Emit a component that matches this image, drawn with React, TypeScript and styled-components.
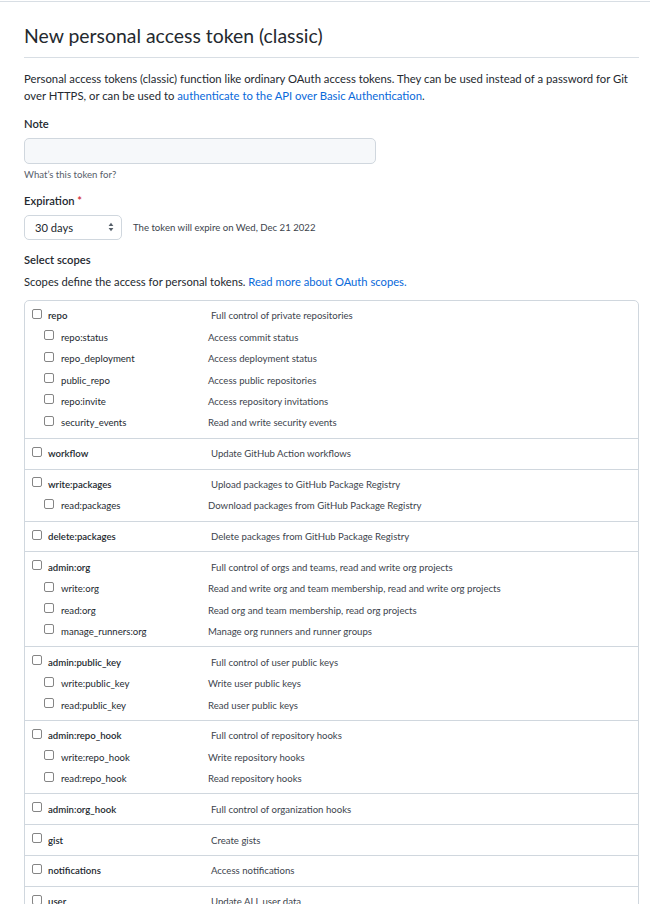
import React from "react";
import styled, { createGlobalStyle } from "styled-components";

const GlobalStyle = createGlobalStyle`
  * { box-sizing: border-box; }
  body {
    margin: 0;
    background: #ffffff;
    color: #24292f;
    font-family: Lato, "Liberation Sans", sans-serif;
    font-size: 11.2px;
  }
`;

type Scope = { name: string; desc: string; children?: [string, string][] };

const scopes: Scope[] = [
  {
    name: "repo",
    desc: "Full control of private repositories",
    children: [
      ["repo:status", "Access commit status"],
      ["repo_deployment", "Access deployment status"],
      ["public_repo", "Access public repositories"],
      ["repo:invite", "Access repository invitations"],
      ["security_events", "Read and write security events"],
    ],
  },
  { name: "workflow", desc: "Update GitHub Action workflows" },
  {
    name: "write:packages",
    desc: "Upload packages to GitHub Package Registry",
    children: [["read:packages", "Download packages from GitHub Package Registry"]],
  },
  { name: "delete:packages", desc: "Delete packages from GitHub Package Registry" },
  {
    name: "admin:org",
    desc: "Full control of orgs and teams, read and write org projects",
    children: [
      ["write:org", "Read and write org and team membership, read and write org projects"],
      ["read:org", "Read org and team membership, read org projects"],
      ["manage_runners:org", "Manage org runners and runner groups"],
    ],
  },
  {
    name: "admin:public_key",
    desc: "Full control of user public keys",
    children: [
      ["write:public_key", "Write user public keys"],
      ["read:public_key", "Read user public keys"],
    ],
  },
  {
    name: "admin:repo_hook",
    desc: "Full control of repository hooks",
    children: [
      ["write:repo_hook", "Write repository hooks"],
      ["read:repo_hook", "Read repository hooks"],
    ],
  },
  { name: "admin:org_hook", desc: "Full control of organization hooks" },
  { name: "gist", desc: "Create gists" },
  { name: "notifications", desc: "Access notifications" },
  { name: "user", desc: "Update ALL user data" },
];

function SelectArrows() {
  return (
    <svg width="6" height="10" viewBox="0 0 6 10">
      <path d="M3 0.8 L5.4 3.9 H0.6 Z" fill="#57606a" />
      <path d="M3 9.2 L5.4 6.1 H0.6 Z" fill="#57606a" />
    </svg>
  );
}

function ScopeRow({ name, desc, sub }: { name: string; desc: string; sub?: boolean }) {
  return (
    <Row $sub={sub}>
      <Check type="checkbox" />
      <ScopeName $sub={sub}>{name}</ScopeName>
      <ScopeDesc>{desc}</ScopeDesc>
    </Row>
  );
}

export default function App() {
  return (
    <>
      <GlobalStyle />
      <TopRule />
      <Main>
        <Subhead>
          <Title>New personal access token (classic)</Title>
        </Subhead>
        <Intro>
          Personal access tokens (classic) function like ordinary OAuth access tokens. They can be used instead of a password for Git
          <br />
          over HTTPS, or can be used to <Link>authenticate to the API over Basic Authentication</Link>.
        </Intro>

        <FieldLabel $top={10.6}>Note</FieldLabel>
        <NoteInput />
        <Hint>What’s this token for?</Hint>

        <FieldLabel $top={10.6}>
          Expiration <Required>*</Required>
        </FieldLabel>
        <ExpirationRow>
          <Select>
            <span>30 days</span>
            <SelectArrows />
          </Select>
          <ExpireNote>The token will expire on Wed, Dec 21 2022</ExpireNote>
        </ExpirationRow>

        <FieldLabel $top={12.6}>Select scopes</FieldLabel>
        <ScopesIntro>
          Scopes define the access for personal tokens. <Link>Read more about OAuth scopes.</Link>
        </ScopesIntro>

        <ScopeBox>
          {scopes.map((s) => (
            <Group key={s.name}>
              <ScopeRow name={s.name} desc={s.desc} />
              {s.children?.map(([n, d]) => (
                <ScopeRow key={n} name={n} desc={d} sub />
              ))}
            </Group>
          ))}
        </ScopeBox>
      </Main>
    </>
  );
}

const TopRule = styled.div`
  height: 2px;
  border-bottom: 1px solid #d8dee4;
`;

const Main = styled.main`
  width: 639px;
  padding-left: 24px;
`;

const Subhead = styled.div`
  margin-top: 20px;
  padding-bottom: 6px;
  border-bottom: 1px solid #d8dee4;
`;

const Title = styled.h1`
  margin: 0;
  font-size: 19.4px;
  line-height: 28.8px;
  font-weight: 400;
  color: #24292f;
`;

const Intro = styled.p`
  margin: 12px 0 0;
  line-height: 17.6px;
  font-size: 11.3px;
`;

const Link = styled.a`
  color: #0969da;
  text-decoration: none;
  cursor: pointer;
`;

const FieldLabel = styled.div<{ $top: number }>`
  margin-top: ${(p) => p.$top}px;
  font-weight: 600;
  line-height: 16.8px;
`;

const Required = styled.span`
  color: #cf222e;
`;

const NoteInput = styled.input`
  display: block;
  margin-top: 5.6px;
  width: 352px;
  height: 26px;
  background: #f6f8fa;
  border: 1px solid #d0d7de;
  border-radius: 5px;
  outline: none;
`;

const Hint = styled.div`
  margin-top: 3.8px;
  font-size: 9.6px;
  line-height: 14.4px;
  color: #57606a;
`;

const ExpirationRow = styled.div`
  margin-top: 5.6px;
  display: flex;
  align-items: center;
  gap: 11px;
`;

const Select = styled.div`
  width: 98px;
  height: 24.5px;
  display: flex;
  align-items: center;
  justify-content: space-between;
  padding: 0 7px 0 10px;
  border: 1px solid #d0d7de;
  border-radius: 5px;
  background: #ffffff;
  font-size: 11.2px;
`;

const ExpireNote = styled.span`
  font-size: 9.6px;
  color: #3d444d;
`;

const ScopesIntro = styled.p`
  margin: 5.2px 0 0;
  line-height: 16.8px;
`;

const ScopeBox = styled.div`
  margin-top: 9px;
  border: 1px solid #d0d7de;
  border-radius: 5px;
`;

const Group = styled.div`
  padding: 4.2px 0;
  & + & {
    border-top: 1px solid #d0d7de;
  }
`;

const Row = styled.label<{ $sub?: boolean }>`
  display: flex;
  align-items: center;
  height: 21.4px;
  padding-left: ${(p) => (p.$sub ? 19 : 7)}px;
  font-size: 9.6px;
`;

const Check = styled.input`
  appearance: none;
  flex: none;
  width: 10px;
  height: 10px;
  margin: 0 0 4px;
  border: 1px solid #858585;
  border-radius: 2px;
  background: #ffffff;
`;

const ScopeName = styled.span<{ $sub?: boolean }>`
  flex: none;
  width: ${(p) => (p.$sub ? 154 : 169)}px;
  padding-left: ${(p) => (p.$sub ? 7 : 6)}px;
  font-weight: ${(p) => (p.$sub ? 400 : 600)};
  color: #24292f;
`;

const ScopeDesc = styled.span`
  color: #3d444d;
`;
